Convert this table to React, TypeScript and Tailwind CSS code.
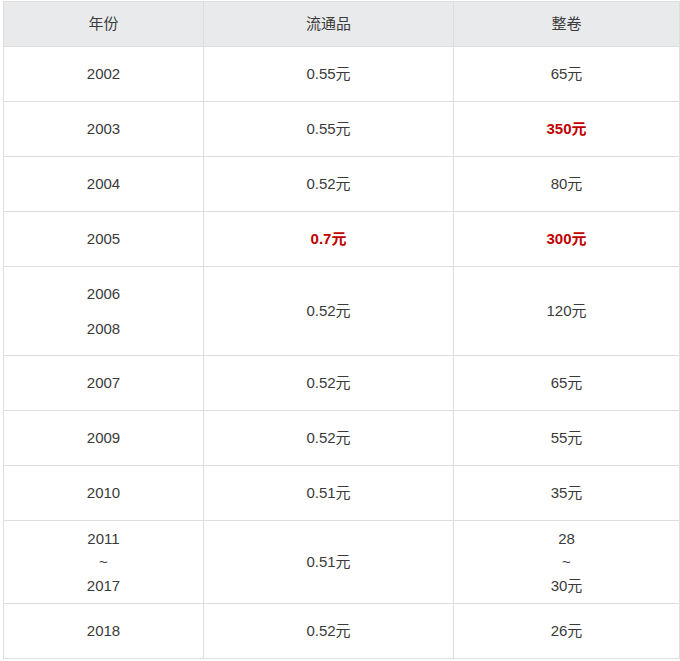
type Row = {
  year: string[];
  a: string;
  b: string[];
  aHot?: boolean;
  bHot?: boolean;
  h: string;
  gap?: boolean;
};

const rows: Row[] = [
  { year: ["2002"], a: "0.55元", b: ["65元"], h: "h-[55px]" },
  { year: ["2003"], a: "0.55元", b: ["350元"], bHot: true, h: "h-[55px]" },
  { year: ["2004"], a: "0.52元", b: ["80元"], h: "h-[55px]" },
  { year: ["2005"], a: "0.7元", b: ["300元"], aHot: true, bHot: true, h: "h-[55px]" },
  { year: ["2006", "2008"], a: "0.52元", b: ["120元"], h: "h-[89px]", gap: true },
  { year: ["2007"], a: "0.52元", b: ["65元"], h: "h-[55px]" },
  { year: ["2009"], a: "0.52元", b: ["55元"], h: "h-[55px]" },
  { year: ["2010"], a: "0.51元", b: ["35元"], h: "h-[55px]" },
  { year: ["2011", "~", "2017"], a: "0.51元", b: ["28", "~", "30元"], h: "h-[83px]" },
  { year: ["2018"], a: "0.52元", b: ["26元"], h: "h-[55px]" },
];

const hot = "font-bold text-[#c00000]";

function Lines({ lines, gap, className = "" }: { lines: string[]; gap?: boolean; className?: string }) {
  return (
    <div className={`flex flex-col items-center ${gap ? "gap-[11px]" : ""} ${className}`}>
      {lines.map((l, i) => (
        <span key={i} className="leading-[23.5px]">
          {l}
        </span>
      ))}
    </div>
  );
}

export default function App() {
  return (
    <div className="bg-white pt-px pl-[3px] w-[680px] h-[661px] font-['Liberation_Sans','Noto_Sans_CJK_SC',sans-serif] text-[15px] text-[#3a3a3a]">
      <table className="border-collapse w-[676px] table-fixed text-center">
        <colgroup>
          <col className="w-[200px]" />
          <col className="w-[250px]" />
          <col className="w-[226px]" />
        </colgroup>
        <thead>
          <tr className="h-[45px] bg-[#e9eaec]">
            <th className="border border-[#dddddd] font-normal">年份</th>
            <th className="border border-[#dddddd] font-normal">流通品</th>
            <th className="border border-[#dddddd] font-normal">整卷</th>
          </tr>
        </thead>
        <tbody>
          {rows.map((r, i) => (
            <tr key={i} className={r.h}>
              <td className="border border-[#dddddd] p-0 align-middle">
                <Lines lines={r.year} gap={r.gap} />
              </td>
              <td className={`border border-[#dddddd] p-0 align-middle ${r.aHot ? hot : ""}`}>{r.a}</td>
              <td className="border border-[#dddddd] p-0 align-middle">
                <Lines lines={r.b} className={r.bHot ? hot : ""} />
              </td>
            </tr>
          ))}
        </tbody>
      </table>
    </div>
  );
}
